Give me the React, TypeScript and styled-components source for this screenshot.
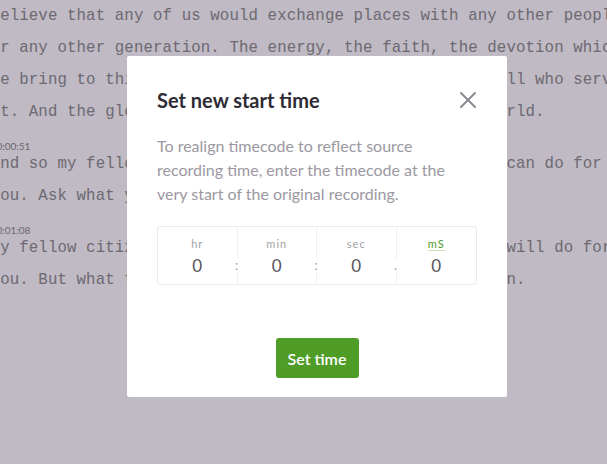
import styled, { createGlobalStyle } from 'styled-components';

const GlobalStyle = createGlobalStyle`
  html, body {
    margin: 0;
    padding: 0;
    height: 100%;
    background: #ffffff;
  }
  #root {
    height: 100%;
  }
`;

type Paragraph = { time?: string; text: string };

const transcript: Paragraph[] = [
  {
    text:
      'believe that any of us would exchange places with any other people or any other generation. The energy, the faith, the devotion which we bring to this endeavor will light our country and all who serve it. And the glow from that fire can truly light the world.',
  },
  {
    time: '00:00:51',
    text:
      'And so my fellow Americans: ask not what your country can do for you. Ask what you can do for your country.',
  },
  {
    time: '00:01:08',
    text:
      'My fellow citizens of the world: ask not what America will do for you. But what together we can do for the freedom of man.',
  },
];

const fields = [
  { label: 'hr', sep: ':' },
  { label: 'min', sep: ':' },
  { label: 'sec', sep: '.' },
  { label: 'mS', active: true },
];

function CloseIcon() {
  return (
    <svg width="16" height="16" viewBox="0 0 16 16" aria-hidden="true">
      <path d="M1 1 15 15 M15 1 1 15" stroke="currentColor" strokeWidth="1.9" strokeLinecap="round" fill="none" />
    </svg>
  );
}

export default function App() {
  return (
    <>
      <GlobalStyle />
      <Page>
        <Transcript>
          {transcript.map((p, i) => (
            <Para key={i}>
              {p.time && <Timestamp>{p.time}</Timestamp>}
              <Text>{p.text}</Text>
            </Para>
          ))}
        </Transcript>
      </Page>
      <Overlay>
        <Modal role="dialog" aria-labelledby="start-title">
          <Header>
            <Title id="start-title">Set new start time</Title>
            <CloseButton type="button" aria-label="Close">
              <CloseIcon />
            </CloseButton>
          </Header>
          <Description>
            To realign timecode to reflect source recording time, enter the timecode at the very start of the
            original recording.
          </Description>
          <Timecode>
            {fields.map((f) => (
              <Cell key={f.label}>
                <Label $active={f.active}>{f.label}</Label>
                <Value>0</Value>
                {f.sep && <Sep>{f.sep}</Sep>}
              </Cell>
            ))}
          </Timecode>
          <Footer>
            <SubmitButton type="button">Set time</SubmitButton>
          </Footer>
        </Modal>
      </Overlay>
    </>
  );
}

const Page = styled.div`
  height: 100vh;
  overflow: hidden;
`;

const Transcript = styled.div`
  margin-left: -9.4px;
  width: 680px;
  font-family: 'Liberation Mono', 'Courier New', monospace;
  font-size: 15.75px;
  letter-spacing: 0.1px;
  color: #8c8c8c;
`;

const Para = styled.div`
  display: flex;
  flex-direction: column;
`;

const Timestamp = styled.div`
  height: 20px;
  box-sizing: border-box;
  padding-top: 13px;
  font-family: Lato, 'Noto Sans', sans-serif;
  font-size: 10px;
  line-height: 10px;
  letter-spacing: 0;
  color: #8a8a8a;
`;

const Text = styled.p`
  margin: 0;
  width: 640px;
  line-height: 32px;
`;

const Overlay = styled.div`
  position: fixed;
  inset: 0;
  display: flex;
  justify-content: center;
  align-items: flex-start;
  padding: 56px 0 0 27px;
  background: rgba(42, 28, 55, 0.3);
`;

const Modal = styled.div`
  width: 380px;
  box-sizing: border-box;
  padding: 30px 30px 19px;
  background: #ffffff;
  border-radius: 2px;
  font-family: Lato, 'Noto Sans', sans-serif;
`;

const Header = styled.div`
  display: flex;
  align-items: center;
  justify-content: space-between;
  height: 28px;
`;

const Title = styled.h2`
  margin: 0;
  font-size: 20px;
  font-weight: 700;
  color: #2e2b34;
`;

const CloseButton = styled.button`
  display: flex;
  margin-right: 1px;
  padding: 0;
  border: none;
  background: none;
  color: #8a8690;
  cursor: pointer;
`;

const Description = styled.p`
  margin: 20px 0 0;
  font-size: 16px;
  line-height: 24px;
  color: #9c98a1;
`;

const Timecode = styled.div`
  display: grid;
  grid-template-columns: repeat(4, 1fr);
  margin-top: 20px;
  border: 1px solid #ebeaee;
  border-radius: 3px;
`;

const Cell = styled.div`
  position: relative;
  display: flex;
  flex-direction: column;
  align-items: center;
  padding: 10px 0 6px;
  border-right: 1px solid #efeef1;

  &:last-child {
    border-right: none;
  }
`;

const Label = styled.span<{ $active?: boolean }>`
  font-size: 11px;
  line-height: 13px;
  letter-spacing: 1px;
  color: ${(p) => (p.$active ? '#4e9a28' : '#a29fa6')};
  border-bottom: 1px solid ${(p) => (p.$active ? '#c4e2b2' : 'transparent')};
`;

const Value = styled.span`
  margin-top: 3px;
  font-size: 17px;
  line-height: 24px;
  color: #57545c;
`;

const Sep = styled.span`
  position: absolute;
  right: -3px;
  bottom: 12px;
  width: 6px;
  text-align: center;
  font-size: 13px;
  line-height: 14px;
  color: #a29fa6;
  background: #ffffff;
`;

const Footer = styled.div`
  display: flex;
  justify-content: center;
  margin-top: 53px;
`;

const SubmitButton = styled.button`
  width: 83px;
  height: 40px;
  border: none;
  border-radius: 3px;
  background: #4f9d27;
  color: #ffffff;
  font-family: Lato, 'Noto Sans', sans-serif;
  font-size: 16px;
  font-weight: 600;
  cursor: pointer;
`;
